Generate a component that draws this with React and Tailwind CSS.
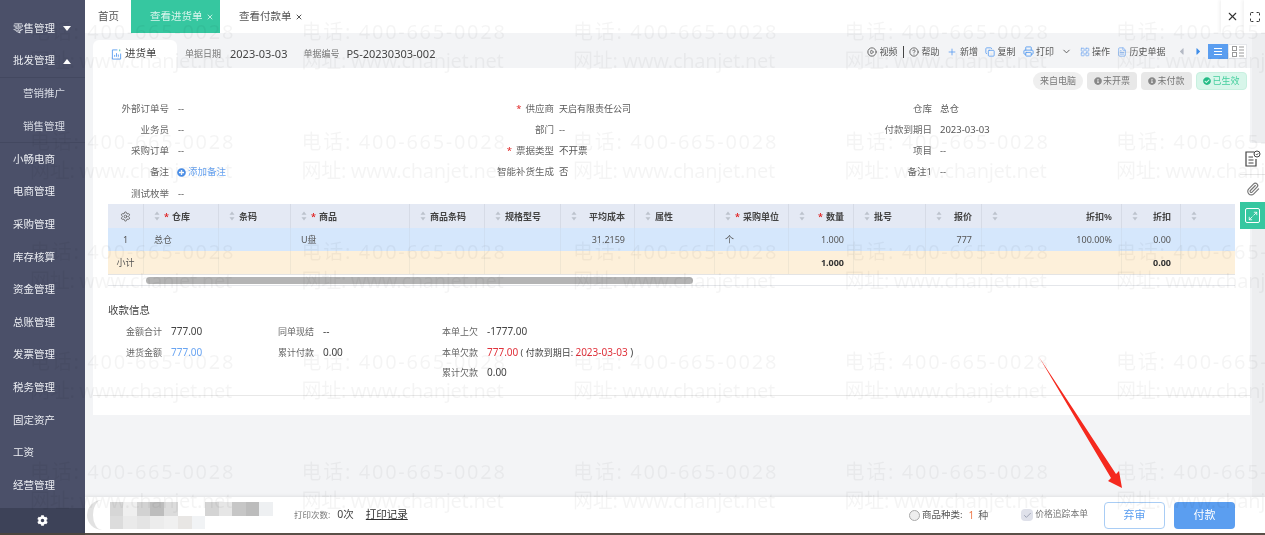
import React from "react";
import { X, Maximize, CirclePlay, CircleHelp, Plus, Copy, Printer, ChevronDown, LayoutGrid, Paperclip, Maximize2, Settings, Check, FileText } from "lucide-react";
import { FaCog, FaCaretLeft, FaCaretRight, FaCheckCircle, FaInfoCircle, FaPlusCircle } from "react-icons/fa";

const menu = [
  { name: "基础设置" },
  { name: "零售管理", caret: "down" },
  { name: "批发管理", caret: "up", line: true },
  { name: "营销推广", sub: true },
  { name: "销售管理", sub: true, line: true },
  { name: "小畅电商" },
  { name: "电商管理" },
  { name: "采购管理" },
  { name: "库存核算" },
  { name: "资金管理" },
  { name: "总账管理" },
  { name: "发票管理" },
  { name: "税务管理" },
  { name: "固定资产" },
  { name: "工资" },
  { name: "经营管理" },
];

const cols = [
  { w: "w-[75px]", title: "仓库", star: true },
  { w: "w-[72px]", title: "条码" },
  { w: "w-[119px]", title: "商品", star: true },
  { w: "w-[75px]", title: "商品条码" },
  { w: "w-[76px]", title: "规格型号" },
  { w: "w-[74px]", title: "平均成本", right: true },
  { w: "w-[80px]", title: "属性" },
  { w: "w-[74px]", title: "采购单位", star: true },
  { w: "w-[65px]", title: "数量", star: true, right: true },
  { w: "w-[72px]", title: "批号" },
  { w: "w-[56px]", title: "报价", right: true },
  { w: "w-[140px]", title: "折扣%", right: true },
  { w: "w-[59px]", title: "折扣", right: true },
  { w: "w-[54px]", title: "" },
];

const row = ["总仓", "", "U盘", "", "", "31.2159", "", "个", "1.000", "", "777", "100.00%", "0.00", ""];
const total = ["", "", "", "", "", "", "", "", "1.000", "", "", "", "0.00", ""];

// blurred-out name in the footer
const mosaic = [
  ["w-[13px]", "bg-[#d6d6d6]"], ["w-[14px]", "bg-[#efefef]"], ["w-[13px]", "bg-[#d2d2d2]"], ["w-[14px]", "bg-[#bdbdbd]"],
  ["w-[14px]", "bg-[#dcdcdc]"], ["w-[27px]", "bg-white"], ["w-[14px]", "bg-[#d4d4d4]"], ["w-[13px]", "bg-[#e6e6e6]"],
  ["w-[14px]", "bg-[#c6c6c6]"], ["w-[13px]", "bg-[#bcbcbc]"], ["w-[14px]", "bg-[#eef0f2]"],
];

const mosaic2 = [
  ["w-[13px]", "bg-[#dcdcdc]"], ["w-[14px]", "bg-[#eaeaea]"], ["w-[13px]", "bg-[#e4e4e4]"], ["w-[14px]", "bg-[#ececec]"],
  ["w-[14px]", "bg-[#f0f0f0]"], ["w-[14px]", "bg-[#e8e6e4]"], ["w-[13px]", "bg-[#f1f3f5]"],
];

const SortCaret = () => (
  <svg width="6" height="10" viewBox="0 0 6 10" className="shrink-0">
    <path d="M3 0.5 L5.5 3.8 L0.5 3.8 Z" fill="#bcc2cc" />
    <path d="M3 9.5 L5.5 6.2 L0.5 6.2 Z" fill="#bcc2cc" />
  </svg>
);

const Field = ({ label, value, star, labelW = "w-[74px]", gap = "ml-[8px]", children }) => (
  <div className="flex items-center h-[21.3px] text-[9.5px]">
    <div className={`${labelW} shrink-0 text-right text-[#666]`}>
      {star && <span className="text-[#e02020] mr-1">*</span>}
      {label}
    </div>
    <div className={`${gap} text-[#555]`}>{children || value}</div>
  </div>
);

const Pay = ({ label, children, x }) => (
  <div className={`flex items-center ${x}`}>
    <span className="text-[9px] text-[#666] w-[35px] whitespace-nowrap">{label}</span>
    <span className="ml-[10px] text-[10px] text-[#444] whitespace-nowrap">{children}</span>
  </div>
);

const Tool = ({ icon, text }) => (
  <div className="flex items-center gap-[2px] text-[9px] text-[#555]">
    {icon}
    <span>{text}</span>
  </div>
);

export default function App() {
  return (
    <div className="relative flex w-[1265px] h-[535px] overflow-hidden bg-[#f3f4f6] font-['Noto_Sans','Noto_Sans_CJK_SC',sans-serif] blur-[0.4px]">
      {/* left menu */}
      <aside className="w-[85px] shrink-0 h-full flex flex-col bg-[#4b5069] text-[#eceef3] text-[10.5px] overflow-hidden">
        <div className="flex-1 mt-[-20px] overflow-hidden">
          {menu.map((m) => (
            <div key={m.name} className={`h-[32.65px] flex items-center ${m.sub ? "pl-[23px] text-[#d8dbe4]" : "pl-[13px]"} ${m.line ? "border-b border-[#434860]" : ""}`}>
              <span>{m.name}</span>
              {m.caret === "down" && <span className="ml-[8px] w-0 h-0 border-x-[4px] border-x-transparent border-t-[5px] border-t-white" />}
              {m.caret === "up" && <span className="ml-[8px] w-0 h-0 border-x-[4px] border-x-transparent border-b-[5px] border-b-white" />}
            </div>
          ))}
        </div>
        <div className="h-[25px] bg-[#3d4258] flex items-center justify-center shrink-0">
          <FaCog className="text-white" size={11} />
        </div>
        <div className="h-[2px] bg-[#4a453f] shrink-0" />
      </aside>

      <div className="flex-1 flex flex-col min-w-0">
        {/* tab bar */}
        <div className="h-[33px] bg-white flex items-center text-[10.5px] text-[#555] shrink-0">
          <span className="ml-[13px] w-[33px]">首页</span>
          <div className="h-full w-[89px] bg-[#36c7a0] text-[#d8f5ec] flex items-center pl-[19px] gap-[3px]">
            查看进货单<X size={8} strokeWidth={2.5} />
          </div>
          <div className="ml-[19px] flex items-center gap-[3px]">
            查看付款单<X size={8} strokeWidth={3} />
          </div>
          <div className="ml-auto flex h-full">
            <div className="w-[22px] flex items-center justify-center shadow-[-2px_0_3px_rgba(0,0,0,0.05)]">
              <X size={13} className="text-[#333]" />
            </div>
            <div className="w-[21px] flex items-center justify-center ml-[1px] shadow-[-2px_0_3px_rgba(0,0,0,0.05)]">
              <Maximize size={12} className="text-[#333]" />
            </div>
          </div>
        </div>

        {/* document */}
        <div className="flex-1 flex flex-col min-h-0 border-r-[13px] border-[#edeef0]">
          <div className="pl-[8px] pr-[2px] shrink-0">
            <div className="h-[35px] flex items-end">
              <div className="w-[84px] h-[28px] bg-white rounded-t-md flex items-center pl-[18px] gap-[3px] text-[10.5px] text-[#444]">
                <svg width="11" height="11" viewBox="0 0 12 12" fill="none" stroke="#5b9ef0" strokeWidth="1">
                  <path d="M7 1H1.5V11H10.5V5" />
                  <path d="M4 8.5V6.5M6 8.5V4.5M8 8.5V6" />
                  <path d="M9.5 0.5V2.5" stroke="#36c7a0" />
                </svg>
                进货单
              </div>
              <div className="h-[28px] flex items-center text-[9px] text-[#777] ml-[8px]">
                <span>单据日期</span>
                <span className="ml-[9px] text-[11px] text-[#444]">2023-03-03</span>
                <span className="ml-[16px]">单据编号</span>
                <span className="ml-[7px] text-[11px] text-[#444]">PS-20230303-002</span>
              </div>
              <div className="ml-auto h-[35px] pr-[3px] flex items-center gap-[7.5px] pt-[2px]">
                <Tool icon={<CirclePlay size={10} className="text-[#555]" />} text="视频" />
                <span className="w-px h-[12px] bg-[#444] -mx-[2px]" />
                <Tool icon={<CircleHelp size={10} className="text-[#555]" />} text="帮助" />
                <Tool icon={<Plus size={10} className="text-[#5b9ef0] mr-[1px]" />} text="新增" />
                <Tool icon={<Copy size={10} className="text-[#5b9ef0]" />} text="复制" />
                <Tool icon={<Printer size={11} className="text-[#5b9ef0]" />} text="打印" />
                <ChevronDown size={11} className="text-[#555]" />
                <Tool icon={<LayoutGrid size={10} className="text-[#7fb0f0]" />} text="操作" />
                <Tool icon={<FileText size={10} className="text-[#7fb0f0]" />} text="历史单据" />
                <FaCaretLeft size={11} className="text-[#b4b9c4] ml-[3px]" />
                <FaCaretRight size={11} className="text-[#3e8de8] -ml-[2px]" />
                <div className="flex h-[15px] -ml-[3px]">
                  <div className="w-[20px] bg-[#5b9ef0] flex flex-col justify-center gap-[2px] px-[6px]">
                    <i className="h-px bg-white" /><i className="h-px bg-white" /><i className="h-px bg-white" />
                  </div>
                  <div className="w-[19px] bg-white border border-[#e5e7eb] flex items-center justify-center">
                    <svg width="12" height="11" viewBox="0 0 12 11" fill="none" stroke="#999" strokeWidth="1">
                      <rect x="0.5" y="0.5" width="4" height="4" />
                      <rect x="0.5" y="6.5" width="4" height="4" />
                      <path d="M7 1H12M7 4H12M7 7H12M7 10H12" />
                    </svg>
                  </div>
                </div>
              </div>
            </div>

            <div className="bg-white h-[347px]">
              {/* status tags */}
              <div className="h-[30px] pt-[4px] pr-[3px] flex justify-end items-start gap-[4px] text-[9px]">
                <div className="w-[50px] h-[18px] rounded-full bg-[#efefef] text-[#777] flex items-center justify-center">来自电脑</div>
                <div className="w-[50px] h-[18px] rounded-sm bg-[#e8e8e8] text-[#777] flex items-center justify-center gap-[1px]"><FaInfoCircle size={8} className="text-[#888]" />未开票</div>
                <div className="w-[51px] h-[18px] rounded-sm bg-[#e8e8e8] text-[#777] flex items-center justify-center gap-[1px]"><FaInfoCircle size={8} className="text-[#888]" />未付款</div>
                <div className="w-[51px] h-[18px] rounded-sm bg-[#d8f6ea] text-[#45cf9e] border border-[#c8f0e0] flex items-center justify-center gap-[1px]"><FaCheckCircle size={8} className="text-[#22bb85]" />已生效</div>
              </div>

              {/* header fields */}
              <div className="grid grid-cols-[387px_378px_1fr]">
                <Field label="外部订单号" value="--" labelW="w-[76px]" gap="ml-[9px]" />
                <Field label="供应商" star gap="ml-[5px]"><span className="text-[9px]">天启有限责任公司</span></Field>
                <Field label="仓库" value="总仓" />
                <Field label="业务员" value="--" labelW="w-[76px]" gap="ml-[9px]" />
                <Field label="部门" value="--" gap="ml-[5px]" />
                <Field label="付款到期日" value="2023-03-03" />
                <Field label="采购订单" value="--" labelW="w-[76px]" gap="ml-[9px]" />
                <Field label="票据类型" value="不开票" star gap="ml-[5px]" />
                <Field label="项目" value="--" />
                <Field label="备注" labelW="w-[76px]" gap="ml-[8px]">
                  <span className="flex items-center gap-[2px] text-[#6aa5f2]"><FaPlusCircle size={9} className="text-[#4b8fe8]" />添加备注</span>
                </Field>
                <Field label="智能补货生成" value="否" gap="ml-[5px]" />
                <Field label="备注1" value="--" />
                <Field label="测试枚举" value="--" labelW="w-[76px]" gap="ml-[9px]" />
              </div>

              {/* goods table */}
              <div className="ml-[15px] w-[1127px] text-[9px] text-[#555]">
                <div className="flex h-[24px] bg-[#e4e9f4] font-semibold text-[#444]">
                  <div className="w-[36px] shrink-0 flex items-center justify-center border-r border-[#d6dbe6]">
                    <Settings size={11} className="text-[#666]" />
                  </div>
                  {cols.map((c, i) => (
                    <div key={i} className={`${c.w} shrink-0 flex items-center pl-[10px] border-r border-[#d6dbe6] last:border-r-0`}>
                      <SortCaret />
                      <div className={`flex items-center ${c.right ? "ml-auto pr-[9px]" : "ml-[4px]"}`}>
                        {c.star && <span className="text-[#e02020] mr-[3px]">*</span>}
                        {c.title}
                      </div>
                    </div>
                  ))}
                </div>
                <div className="flex h-[23px] bg-[#d5e7fc]">
                  <div className="w-[36px] shrink-0 flex items-center justify-center border-r border-[#cfdff2]">1</div>
                  {cols.map((c, i) => (
                    <div key={i} className={`${c.w} shrink-0 flex items-center px-[10px] border-r border-[#cfdff2] last:border-r-0 ${c.right ? "justify-end pr-[9px]" : ""}`}>{row[i]}</div>
                  ))}
                </div>
                <div className="flex h-[24px] bg-[#fdf0da] border-b border-[#e4e4e4]">
                  <div className="w-[36px] shrink-0 flex items-center justify-center border-r border-[#f0e6d2]">小计</div>
                  {cols.map((c, i) => (
                    <div key={i} className={`${c.w} shrink-0 flex items-center px-[10px] border-r border-[#f0e6d2] last:border-r-0 font-bold text-[#333] ${c.right ? "justify-end pr-[9px]" : ""}`}>{total[i]}</div>
                  ))}
                </div>
                <div className="h-[11px] border-b border-[#e4e6ea] pl-[38px] pt-[2px]">
                  <div className="w-[547px] h-[7px] rounded-full bg-[#b4b4b4]" />
                </div>
              </div>

              {/* payment info */}
              <div className="mt-[16px] ml-[15px] text-[10.5px] text-[#444] leading-[16px]">收款信息</div>
              <div className="mt-[3px] h-[75px] border-b border-[#e8e8e8] pl-[33px]">
                <div className="h-[21px] flex">
                  <Pay label="金额合计" x="w-[152px]">777.00</Pay>
                  <Pay label="同单现结" x="w-[164px]">--</Pay>
                  <Pay label="本单上欠" x="">-1777.00</Pay>
                </div>
                <div className="h-[20px] flex">
                  <Pay label="进货金额" x="w-[152px]"><span className="text-[#6aa5f2]">777.00</span></Pay>
                  <Pay label="累计付款" x="w-[164px]">0.00</Pay>
                  <Pay label="本单欠款" x="">
                    <span className="text-[#e0323c]">777.00</span>
                    <span className="text-[9px]"> ( 付款到期日: </span>
                    <span className="text-[#e0323c]">2023-03-03</span> )
                  </Pay>
                </div>
                <div className="h-[21px] flex">
                  <div className="w-[152px]" />
                  <div className="w-[164px]" />
                  <Pay label="累计欠款" x="">0.00</Pay>
                </div>
              </div>
            </div>
          </div>
          <div className="flex-1" />
        </div>

        {/* footer bar */}
        <div className="h-[36px] bg-white shrink-0 flex items-center shadow-[0_-1px_3px_rgba(0,0,0,0.08)]">
          <div className="ml-[2px] w-[23px] h-[30px] rounded-l-full border-l-[6px] border-[#e2e2e2]" />
          <div className="w-[163px] shrink-0 flex flex-col">
            <div className="flex h-[14px]">
              {mosaic.map(([w, c], i) => <div key={i} className={`${w} ${c}`} />)}
            </div>
            <div className="flex h-[13px]">
              {mosaic2.map(([w, c], i) => <div key={i} className={`${w} ${c}`} />)}
            </div>
          </div>
          <span className="ml-[21px] text-[8.5px] text-[#777]">打印次数:</span>
          <span className="ml-[7px] text-[10.5px] text-[#444]">0次</span>
          <span className="ml-[12px] text-[10.5px] text-[#333] underline">打印记录</span>

          <div className="ml-auto flex items-center pr-[30px]">
            <span className="w-[11px] h-[11px] rounded-full border border-[#aaa] bg-[#eee] mr-[2px]" />
            <span className="text-[9.5px] text-[#555]">商品种类:</span>
            <span className="ml-[6px] text-[10px] text-[#ee7a4a]">1</span>
            <span className="ml-[4px] text-[10px] text-[#666]">种</span>
            <span className="ml-[33px] w-[12px] h-[12px] rounded-sm bg-[#dfe1ea] flex items-center justify-center">
              <Check size={9} className="text-[#8a8fa3]" />
            </span>
            <span className="ml-[2px] text-[8.8px] text-[#777]">价格追踪本单</span>
            <button className="ml-[16px] w-[61px] h-[27px] rounded-sm border border-[#a9cdf5] bg-white text-[11px] text-[#5b9ef0]">弃审</button>
            <button className="ml-[9px] w-[61px] h-[27px] rounded-sm bg-[#5b9ef0] text-[11px] text-white">付款</button>
          </div>
        </div>
        <div className="h-[2px] bg-[#5a5048] shrink-0" />
      </div>

      {/* side tools, over the card */}
      <div className="absolute right-0 top-[143px] w-[25px] flex flex-col items-center">
        <div className="w-full h-[32px] bg-white flex items-center justify-center border-b border-[#e6e6e6]">
          <svg width="17" height="17" viewBox="0 0 17 17" fill="none" stroke="#444" strokeWidth="1.2">
            <path d="M10 2H2V16H12V9" />
            <path d="M4.5 7H9M4.5 10H9.5M4.5 13H9.5" />
            <circle cx="13" cy="4" r="3" strokeWidth="1" />
            <path d="M11.8 4L12.8 5L14.3 3.2" strokeWidth="0.8" />
          </svg>
        </div>
        <div className="w-full h-[27px] bg-white flex items-center justify-center">
          <Paperclip size={14} className="text-[#777]" />
        </div>
        <div className="w-full h-[27px] bg-[#36c7a0] flex items-center justify-center">
          <div className="w-[15px] h-[15px] border border-white rounded-[2px] flex items-center justify-center">
            <Maximize2 size={10} className="text-white" />
          </div>
        </div>
      </div>

      {/* red annotation arrow */}
      <svg className="absolute left-0 top-0 pointer-events-none" width="1265" height="535">
        <polygon points="1039,357 1116,474 1119,471 1122,488 1108,481 1111,478" fill="#f5291e" />
      </svg>

      {/* watermark */}
      <div className="absolute inset-0 pointer-events-none overflow-hidden pl-[30px] pt-[17px] grid grid-cols-[repeat(5,271.5px)] auto-rows-[110px] text-[20px] text-black/[0.045] tracking-[1.7px] leading-[29px] whitespace-nowrap">
        {Array.from({ length: 25 }).map((_, i) => (
          <div key={i}>
            <div>电话: 400-665-0028</div>
            <div className="tracking-[-0.3px]">网址: www.chanjet.net</div>
          </div>
        ))}
      </div>
    </div>
  );
}
